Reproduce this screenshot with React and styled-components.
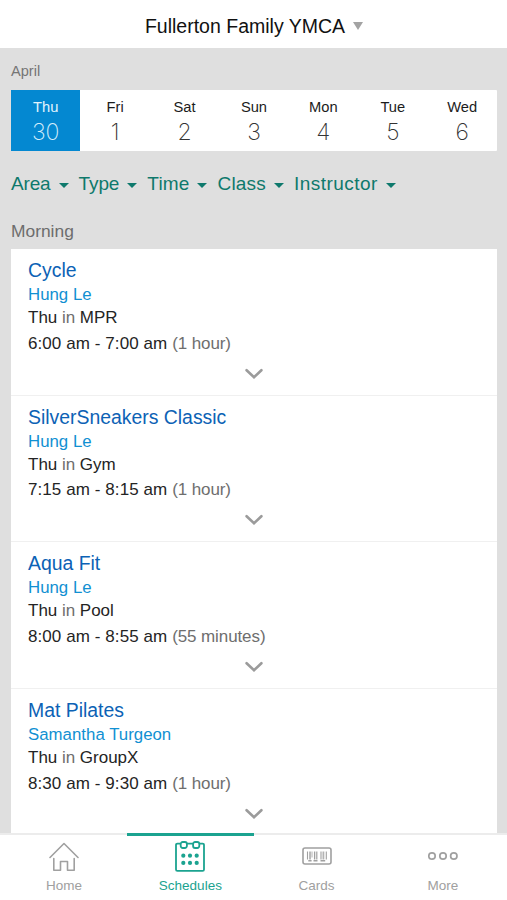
import styled, { createGlobalStyle } from 'styled-components'

const days = [
  { name: 'Thu', date: 30 },
  { name: 'Fri', date: 1 },
  { name: 'Sat', date: 2 },
  { name: 'Sun', date: 3 },
  { name: 'Mon', date: 4 },
  { name: 'Tue', date: 5 },
  { name: 'Wed', date: 6 },
]

const filters = [
  { name: 'Area', spacing: -0.15 },
  { name: 'Type', spacing: -0.1 },
  { name: 'Time', spacing: 0.15 },
  { name: 'Class', spacing: 0.2 },
  { name: 'Instructor', spacing: 0.45 },
]

const classes = [
  { title: 'Cycle', teacher: 'Hung Le', room: 'MPR', time: '6:00 am - 7:00 am', length: '1 hour' },
  { title: 'SilverSneakers Classic', teacher: 'Hung Le', room: 'Gym', time: '7:15 am - 8:15 am', length: '1 hour' },
  { title: 'Aqua Fit', teacher: 'Hung Le', room: 'Pool', time: '8:00 am - 8:55 am', length: '55 minutes' },
  { title: 'Mat Pilates', teacher: 'Samantha Turgeon', room: 'GroupX', time: '8:30 am - 9:30 am', length: '1 hour' },
]

function HomeIcon() {
  return (
    <svg width='30' height='32' viewBox='0 0 30 32' fill='none' stroke='currentColor' strokeWidth='1.6' strokeLinecap='round' strokeLinejoin='round'>
      <path d='M1 16.5 15 2.5 29 16.5' />
      <path d='M4.8 17.5V29.3H11.5V20.5H18.5V29.3H25.2V17.5' />
    </svg>
  )
}

function CalendarIcon() {
  return (
    <svg width='30' height='32' viewBox='0 0 30 32' fill='none' stroke='currentColor' strokeWidth='1.8'>
      <path d='M5.2 2.6H2.4Q1 2.6 1 4V28.4Q1 29.8 2.4 29.8H27.6Q29 29.8 29 28.4V4Q29 2.6 27.6 2.6H24.8M11.8 2.6H18.2' />
      <rect x='5.7' y='1' width='6.2' height='6' rx='2' />
      <rect x='18.1' y='1' width='6.2' height='6' rx='2' />
      <g fill='currentColor' stroke='none'>
        {[8.3, 15, 21.7].map((x) => (
          <g key={x}>
            <circle cx={x} cy='14.7' r='2.1' />
            <circle cx={x} cy='21.9' r='2.1' />
          </g>
        ))}
      </g>
    </svg>
  )
}

function CardIcon() {
  return (
    <svg width='30' height='32' viewBox='0 0 30 32' fill='none' stroke='currentColor'>
      <rect x='1' y='7' width='28' height='16' rx='2' strokeWidth='1.6' />
      <path d='M5.5 10.5V18.5M12.5 10.5V18.5M19 10.5V18.5M24.3 10.5V18.5' strokeWidth='1.1' />
      <path d='M8 10.5V18.5M14.6 10.5V18.5M21.4 10.5V18.5' strokeWidth='1.8' opacity='.8' />
      <path d='M6.3 19.8H9.6M11.5 19.8H15.5M18.5 19.8H23.2' strokeWidth='1.5' />
      <path d='M10 10.5V16.5' strokeWidth='.8' />
    </svg>
  )
}

function MoreIcon() {
  return (
    <svg width='30' height='32' viewBox='0 0 30 32' fill='none' stroke='currentColor' strokeWidth='1.7'>
      <circle cx='4' cy='15' r='3.2' />
      <circle cx='15' cy='15' r='3.2' />
      <circle cx='25.8' cy='15' r='3.2' />
    </svg>
  )
}

const tabs = [
  { label: 'Home', Icon: HomeIcon },
  { label: 'Schedules', Icon: CalendarIcon, active: true },
  { label: 'Cards', Icon: CardIcon },
  { label: 'More', Icon: MoreIcon },
]

function ClassCard({ item }) {
  return (
    <StyledClass>
      <h2>{item.title}</h2>
      <h3>{item.teacher}</h3>
      <p className='place'>
        Thu <span>in</span> {item.room}
      </p>
      <p className='time'>
        {item.time} <span>({item.length})</span>
      </p>
      <svg width='20' height='12' viewBox='0 0 20 12' fill='none' stroke='#9b9b9b' strokeWidth='2.6' strokeLinecap='round'>
        <path d='M2.6 2.2 10 9.3 17.4 2.2' />
      </svg>
    </StyledClass>
  )
}

function App() {
  return (
    <Screen>
      <GlobalStyle />
      <Header>
        <h1>Fullerton Family YMCA</h1>
        <Caret $width={10} $height={8} $color='#a3a3a3' />
      </Header>

      <Content>
        <Month>April</Month>
        <Week>
          {days.map((day, i) => (
            <Day key={day.name} $active={i === 0}>
              {day.name}
              <strong>{day.date}</strong>
            </Day>
          ))}
        </Week>
        <Filters>
          {filters.map(({ name, spacing }) => (
            <Filter key={name} $spacing={spacing}>
              {name}
              <Caret $width={10} $height={5} $color='#0e796c' />
            </Filter>
          ))}
        </Filters>
        <Period>Morning</Period>
        <ClassList>
          {classes.map((item) => (
            <ClassCard key={item.title} item={item} />
          ))}
        </ClassList>
      </Content>

      <TabBar>
        {tabs.map(({ label, Icon, active }) => (
          <Tab key={label} $active={active}>
            <Icon />
            {label}
          </Tab>
        ))}
      </TabBar>
    </Screen>
  )
}

export default App

const GlobalStyle = createGlobalStyle`
  * {
    box-sizing: border-box;
  }

  body {
    margin: 0;
    overflow: hidden;
    font-family: 'Liberation Sans', Arial, sans-serif;
  }

  h1, h2, h3, p {
    margin: 0;
    font-weight: 400;
  }
`

const Screen = styled.div`
  width: 507px;
  height: 900px;
  display: flex;
  flex-direction: column;
  background: #fff;
`

const Caret = styled.i`
  border-left: ${(p) => p.$width / 2}px solid transparent;
  border-right: ${(p) => p.$width / 2}px solid transparent;
  border-top: ${(p) => p.$height}px solid ${(p) => p.$color};
`

const Header = styled.header`
  height: 48px;
  flex: none;
  padding: 4px 0 0 1px;
  display: flex;
  align-items: center;
  justify-content: center;
  gap: 8px;
  color: #111;

  & h1 {
    font-size: 19.5px;
    line-height: 24px;
  }
`

const Content = styled.main`
  flex: 1;
  min-height: 0;
  overflow: hidden;
  padding: 0 10px 0 11px;
  display: flex;
  flex-direction: column;
  background: #dfdfdf;
`

const Month = styled.div`
  height: 42px;
  flex: none;
  font-size: 14.6px;
  line-height: 46px;
  color: #757575;
`

const Week = styled.div`
  height: 61px;
  flex: none;
  display: flex;
  background: #fff;
  border-radius: 1px;
`

const Day = styled.div`
  flex: 1;
  padding-top: 7px;
  font-size: 14.7px;
  line-height: 20px;
  text-align: center;
  color: ${(p) => (p.$active ? '#e2f3fd' : '#1c1c1c')};
  background: ${(p) => (p.$active ? '#0488d1' : 'transparent')};

  & strong {
    display: block;
    font-family: Inter, 'Liberation Sans', sans-serif;
    font-size: 23px;
    font-weight: 200;
    line-height: 30px;
    color: ${(p) => (p.$active ? '#d5edfb' : '#333')};
  }
`

const Filters = styled.div`
  height: 66px;
  flex: none;
  display: flex;
  align-items: center;
  gap: 10px;
`

const Filter = styled.div`
  display: flex;
  align-items: center;
  gap: 8px;
  font-size: 19px;
  line-height: 24px;
  letter-spacing: ${(p) => p.$spacing}px;
  color: #0e796c;

  & i {
    margin-top: 3px;
  }
`

const Period = styled.div`
  height: 32px;
  flex: none;
  font-size: 17.4px;
  line-height: 28px;
  color: #6d6d6d;
`

const ClassList = styled.div`
  background: #fff;
`

const StyledClass = styled.section`
  height: 146.7px;
  padding: 8px 17px 0;
  border-bottom: 1px solid #f0f0f0;
  color: #242424;

  & h2 {
    font-size: 19.4px;
    line-height: 26px;
    color: #0c62b5;
  }

  & h3 {
    font-size: 16.8px;
    line-height: 23px;
    letter-spacing: 0.03px;
    color: #1190d2;
  }

  & p {
    font-size: 17px;
    line-height: 23px;
  }

  & .time {
    margin-top: 2.5px;
    letter-spacing: 0.08px;
  }

  & span {
    letter-spacing: -0.1px;
    color: #6e6e6e;
  }

  & svg {
    display: block;
    margin: 13px auto 0;
  }
`

const TabBar = styled.nav`
  height: 67px;
  flex: none;
  display: flex;
  background: linear-gradient(#ececec 2px, #fff 2px);
  padding: 0 1px;
`

const Tab = styled.div`
  flex: 1;
  padding-top: ${(p) => (p.$active ? 5 : 6)}px;
  border-top: ${(p) => (p.$active ? '3px solid #1ba390' : '2px solid #ececec')};
  display: flex;
  flex-direction: column;
  align-items: center;
  gap: 4px;
  font-size: 13.5px;
  line-height: 18px;
  color: ${(p) => (p.$active ? '#1ba390' : '#a0a0a0')};
`
